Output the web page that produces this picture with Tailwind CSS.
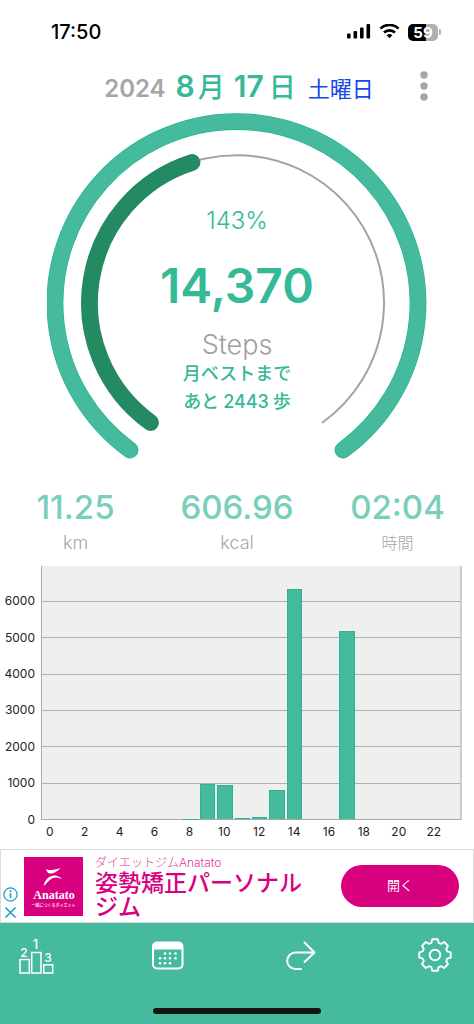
<!DOCTYPE html>
<html lang="ja">
<head>
<meta charset="utf-8">
<meta name="viewport" content="width=device-width, initial-scale=1">
<title>歩数計</title>
<script src="https://cdn.jsdelivr.net/npm/@tailwindcss/browser@4"></script>
</head>
<body class="bg-white font-['Inter','Noto_Sans_CJK_JP',sans-serif]">
<div class="flex min-h-screen flex-col overflow-hidden">

  <!-- Status bar -->
  <div class="flex h-16 items-center justify-between pl-[51px] pr-[33px] text-black">
    <span class="text-[20px] font-medium leading-6">17:50</span>
    <div class="flex items-center gap-2">
      <svg class="h-4 w-6" viewBox="0 0 24 16" aria-hidden="true"><rect x="0" y="9.500" width="3.600" height="5" rx="1"/><rect x="6.500" y="7" width="3.600" height="7.500" rx="1"/><rect x="13" y="3.500" width="3.600" height="11" rx="1"/><rect x="19.500" y="0" width="3.600" height="14.500" rx="1"/></svg>
      <svg class="h-4 w-[21px]" viewBox="0 1 21 16" fill="none" stroke="#000" stroke-width="2.700" aria-hidden="true"><path d="M1.500 5.600a13 13 0 0 1 18 0"/><path d="M5 9.600a8 8 0 0 1 11 0"/><path d="M10.500 15.300l-2.900-3a4.200 4.200 0 0 1 5.800 0z" fill="#000" stroke="none"/></svg>
      <div class="flex items-center gap-px">
        <div class="flex h-[17px] w-[30px] items-center justify-center rounded-[5px] bg-linear-to-r from-black from-60% to-[#b0b0b0] to-60% text-[15px] font-bold leading-none text-white">59</div>
        <div class="h-[6px] w-[2px] rounded-r-full bg-[#b0b0b0]"></div>
      </div>
    </div>
  </div>

  <!-- Date -->
  <header class="grid h-12 grid-cols-[1fr_auto_1fr] items-start">
    <h1 class="col-start-2 flex items-baseline whitespace-nowrap pl-1 font-semibold leading-[44px] text-[#35b998]">
      <span class="mr-[10px] text-[24px] text-[#a6a6a6]">2024</span>
      <span class="text-[30px]">8</span><span class="ml-[3px] text-[27px] font-medium">月</span>
      <span class="ml-[9px] text-[30px]">17</span><span class="ml-[5px] text-[27px] font-medium">日</span>
      <span class="ml-[12px] text-[22px] font-normal text-[#1549e8]">土曜日</span>
    </h1>
    <button type="button" aria-label="メニュー" class="mr-10 flex h-11 w-5 items-center justify-center justify-self-end">
      <svg class="h-[30px] w-2" viewBox="0 0 8 30" fill="#a6a6a6"><circle cx="4" cy="4" r="3.700"/><circle cx="4" cy="15" r="3.700"/><circle cx="4" cy="26" r="3.700"/></svg>
    </button>
  </header>

  <!-- Step gauge -->
  <section class="grid justify-items-center">
    <svg class="[grid-area:1/1] h-[348px] w-[380px]" viewBox="0.5 0 380 348" fill="none" stroke-linecap="round" aria-hidden="true">
      <path d="M83.500 338A181.500 181.500 0 1 1 296.500 338" stroke="#1fb592" stroke-width="16.800"/>
      <path d="M83.500 338A181.500 181.500 0 1 1 296.500 338" stroke="#45ba9d" stroke-width="15.600"/>
      <path d="M104 310.500A147.500 147.500 0 1 1 276 310.500" stroke="#a3a3a3" stroke-width="2"/>
      <path d="M104 310.500A147.500 147.500 0 0 1 145.500 50.500" stroke="#248a62" stroke-width="16.800"/>
    </svg>
    <div class="[grid-area:1/1] flex flex-col items-center text-[#35b998]">
      <p class="mt-[94px] text-[24px] font-light leading-[30px]">143%</p>
      <p class="mt-[21px] text-[48px] font-semibold leading-[58px]">14,370</p>
      <p class="mt-[14px] text-[27px] font-light leading-[32px] text-[#a0a0a0]">Steps</p>
      <p class="mt-[-1px] text-center text-[18px] font-medium leading-[28px]">月ベストまで<br>あと<span class="mx-1">2443</span>歩</p>
    </div>
  </section>

  <!-- Totals -->
  <dl class="mt-[27px] grid grid-cols-3 text-center">
    <div class="flex flex-col-reverse pr-[7px]"><dt class="text-[18px] font-light leading-8 text-[#a6a6a6]">km</dt><dd class="text-[33px] font-medium leading-10 text-[#78cfba]">11.25</dd></div>
    <div class="flex flex-col-reverse"><dt class="text-[18px] font-light leading-8 text-[#a6a6a6]">kcal</dt><dd class="text-[33px] font-medium leading-10 text-[#78cfba]">606.96</dd></div>
    <div class="flex flex-col-reverse pl-[5px]"><dt class="text-[16px] font-light leading-8 text-[#a6a6a6]">時間</dt><dd class="text-[33px] font-medium leading-10 text-[#78cfba]">02:04</dd></div>
  </dl>

  <!-- Hourly chart -->
  <section class="mt-[7px] flex h-[283px] pr-3 text-[12px] leading-4 text-[#222]" aria-label="時間別の歩数">
    <div class="flex h-[272px] w-[41px] shrink-0 flex-col pr-[6px] pt-[17px] text-right">
      <span class="flex flex-1 items-center justify-end">6000</span>
      <span class="flex flex-1 items-center justify-end">5000</span>
      <span class="flex flex-1 items-center justify-end">4000</span>
      <span class="flex flex-1 items-center justify-end">3000</span>
      <span class="flex flex-1 items-center justify-end">2000</span>
      <span class="flex flex-1 items-center justify-end">1000</span>
      <span class="flex flex-1 items-center justify-end">0</span>
    </div>
    <div class="min-w-0 flex-1">
      <div class="grid h-[254px] border-b border-l border-r-2 border-b-[#aaa] border-l-[#aaa] border-r-[#ccc] bg-[#efefef]">
        <div class="[grid-area:1/1] flex flex-col">
          <div class="h-[35px]"></div>
          <div class="flex-1 border-t border-[#b0b0b0]"></div>
          <div class="flex-1 border-t border-[#b0b0b0]"></div>
          <div class="flex-1 border-t border-[#b0b0b0]"></div>
          <div class="flex-1 border-t border-[#b0b0b0]"></div>
          <div class="flex-1 border-t border-[#b0b0b0]"></div>
          <div class="flex-1 border-t border-[#b0b0b0]"></div>
        </div>
        <div id="bars" class="[grid-area:1/1] flex items-end"></div>
      </div>
      <div id="hours" class="mt-1 flex pr-[2px]"></div>
    </div>
  </section>

  <!-- Advertisement -->
  <aside class="flex h-[74px] items-center border border-[#dcdcdc] bg-white pr-[14px]">
    <div class="flex w-[23px] flex-col items-start gap-[3px] self-end pb-[2px] pl-[2px]">
      <button type="button" aria-label="広告について"><svg class="block size-[15px]" viewBox="0 0 15 15" fill="none" stroke="#159cc6" stroke-width="1.200"><circle cx="7.500" cy="7.500" r="6.600"/><path d="M7.500 6.400V11" stroke-width="1.600"/><circle cx="7.500" cy="4.300" r="1" fill="#159cc6" stroke="none"/></svg></button>
      <button type="button" aria-label="広告を閉じる"><svg class="block size-[15px]" viewBox="0 0 15 15" fill="none" stroke="#159cc6" stroke-width="1.500"><path d="M2.500 2.500l10 10M12.500 2.500l-10 10"/></svg></button>
    </div>
    <svg class="size-[59px] shrink-0" viewBox="0 0 59 59" role="img" aria-label="Anatato">
      <rect width="59" height="59" fill="#d9007f"/>
      <path d="M22 12c2.500 1.600 6.500 1.500 14.500-1-3 4.200-8.500 6.300-11.500 5.300-1.500-.6-2.500-2.300-3-4.300z" fill="#fff"/>
      <path d="M19.500 29c1.500-6.500 6-10.500 11-10.500 3 0 5.200 1.300 7.500 3.700-3.600-1.900-6.700-2.200-9.700-.9-3.700 1.700-5.600 5.700-8.800 7.700z" fill="#fff"/>
      <text x="30" y="42" fill="#fff" font-family="Liberation Serif, serif" font-weight="700" font-size="12" text-anchor="middle">Anatato</text>
      <text x="29.500" y="50" fill="#fff" font-family="Noto Sans CJK JP, sans-serif" font-weight="500" font-size="4" text-anchor="middle">一緒につくるダイエット</text>
    </svg>
    <div class="ml-3 flex-1 text-[#d9007f]">
      <p class="text-[12px] font-light leading-[17px] text-[#e0409c]">ダイエットジムAnatato</p>
      <p class="w-[220px] text-[23px] font-medium leading-6">姿勢矯正パーソナルジム</p>
    </div>
    <button type="button" class="h-[42px] w-[118px] shrink-0 rounded-full bg-[#d9007f] text-[13px] font-normal text-white">開く</button>
  </aside>

  <!-- Bottom navigation -->
  <nav class="flex flex-1 flex-col justify-between bg-[#45ba9d] pb-[10px] pt-[14px] text-white">
    <div class="flex items-center justify-between pl-[18px] pr-[21px]">
      <button type="button" aria-label="ランキング">
        <svg class="block h-[38px] w-9 overflow-visible" viewBox="0 -1 36 38" fill="none" stroke="#fff" stroke-width="1.500">
          <rect x="2" y="21.500" width="9.300" height="13.500"/><rect x="13.700" y="14.500" width="9.300" height="20.500"/><rect x="25.700" y="26.800" width="9" height="8.200"/>
          <g fill="#fff" stroke="none" font-family="Inter, sans-serif" font-weight="500" text-anchor="middle"><text x="6" y="19" font-size="12">2</text><text x="17.500" y="11" font-size="13">1</text><text x="30" y="24" font-size="12">3</text></g>
        </svg>
      </button>
      <button type="button" aria-label="カレンダー">
        <svg class="block size-9" viewBox="1 0 36 36">
          <rect x="3" y="4.500" width="29.500" height="26" rx="4" fill="none" stroke="#fff" stroke-width="2"/>
          <path d="M3 11.500V8.500a4 4 0 0 1 4-4H28.500a4 4 0 0 1 4 4v3z" fill="#fff"/>
          <g fill="#fff"><circle cx="15" cy="15.500" r="1.300"/><circle cx="20" cy="15.500" r="1.300"/><circle cx="25.500" cy="15.500" r="1.300"/><circle cx="10" cy="20.300" r="1.300"/><circle cx="15" cy="20.300" r="1.300"/><circle cx="20" cy="20.300" r="1.300"/><circle cx="25.500" cy="20.300" r="1.300"/><circle cx="10" cy="25.300" r="1.300"/><circle cx="15" cy="25.300" r="1.300"/><circle cx="20" cy="25.300" r="1.300"/></g>
        </svg>
      </button>
      <button type="button" aria-label="共有">
        <svg class="block size-9" viewBox="1 1 36 36" fill="none" stroke="#fff" stroke-width="2" stroke-linecap="round" stroke-linejoin="round"><path d="M21.500 5.500L31.500 15.500 21.500 25M31 15.500H12.500a8.300 8.300 0 0 0 0 16.600H18"/></svg>
      </button>
      <button type="button" aria-label="設定">
        <svg class="block size-9" viewBox="-18 -17 36 36" fill="none" stroke="#fff" stroke-width="1.900" stroke-linejoin="round"><circle r="5.300"/><path d="M-2.700-15.700H2.700L3.600-12.200 6.100-11.200 9.200-13 13-9.200 11.200-6.100 12.200-3.600 15.700-2.700V2.700L12.200 3.600 11.200 6.100 13 9.200 9.200 13 6.100 11.200 3.600 12.200 2.700 15.700H-2.700L-3.600 12.200-6.100 11.200-9.200 13-13 9.200-11.200 6.100-12.200 3.600-15.700 2.700V-2.700L-12.200-3.600-11.200-6.100-13-9.200-9.200-13-6.100-11.200-3.600-12.200z"/></svg>
      </button>
    </div>
    <div class="h-[6px] w-[168px] self-center rounded-full bg-[#10170f]"></div>
  </nav>
</div>

<script>
  // Steps for each hour of the day; the plot's top edge stands for MAX steps.
  const MAX = 6950;
  const steps = [0,0,0,0,0,0,0,0,8,950,940,25,60,800,6320,0,0,5160,0,0,0,0,0,0];
  const bars = document.getElementById('bars');
  const hours = document.getElementById('hours');
  steps.forEach((n, h) => {
    const slot = document.createElement('div');
    slot.className = 'flex h-full min-w-0 flex-1 items-end px-px';
    if (n) {
      const bar = document.createElement('div');
      bar.className = 'w-full bg-[#45ba9d] border-x border-t border-[#27b594]';
      if (n < 50) bar.className = 'w-full bg-[#27b594]';
      bar.style.height = (n / MAX * 100) + '%';
      slot.append(bar);
    }
    bars.append(slot);
    const label = document.createElement('span');
    label.className = 'flex min-w-0 flex-1 justify-center';
    if (h % 2 === 0) label.textContent = h;
    hours.append(label);
  });
</script>
</body>
</html>
